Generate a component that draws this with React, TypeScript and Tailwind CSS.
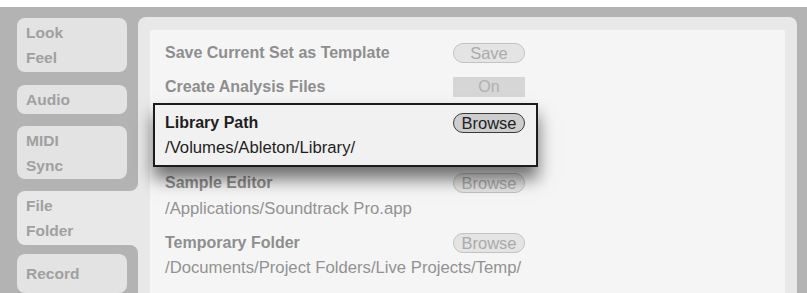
const font = "font-['Liberation_Sans',Arial,sans-serif]"

function Tab({ lines, h, selected }: { lines: string[]; h: string; selected?: boolean }) {
    return (
        <div className={`flex ${h}`}>
            <div
                className={`w-[110px] flex flex-col justify-center pl-[9px] font-bold text-[15.5px] leading-[25px] text-[#a0a0a0] ${selected ? "bg-[#e8e8e8] rounded-l-[8px]" : "bg-[#e3e3e3] rounded-[8px]"}`}
            >
                {lines.map((l) => (
                    <span key={l}>{l}</span>
                ))}
            </div>
            <div className={`w-[11px] ${selected ? "bg-[#e8e8e8]" : ""}`} />
        </div>
    )
}

function Pill({ label, active }: { label: string; active?: boolean }) {
    return (
        <div
            className={`w-[72px] h-[20px] rounded-full border flex items-center justify-center text-[16.5px] leading-none ${active ? "border-[#3a3a3a] bg-[#cdcdcd] text-[#222]" : "border-[#c2c2c2] bg-[#e4e4e4] text-[#aaaaaa]"}`}
        >
            {label}
        </div>
    )
}

function Row({ label, children, h = "h-[26px]", mt = "" }: { label: string; children?: React.ReactNode; h?: string; mt?: string }) {
    return (
        <div className={`w-[360px] ${h} ${mt} flex items-center justify-between`}>
            <span className="font-bold text-[16px] text-[#8e8e8e]">{label}</span>
            {children}
        </div>
    )
}

function PathLine({ text, h = "h-[26px]", dark }: { text: string; h?: string; dark?: boolean }) {
    return (
        <div className={`${h} flex items-center text-[16.7px] ${dark ? "text-[#1e1e1e]" : "text-[#929292]"}`}>{text}</div>
    )
}

export default function App() {
    return (
        <div className={`w-[807px] h-[293px] overflow-hidden bg-white pt-[7px] ${font}`}>
            <div className="h-full bg-[#b3b3b3] flex pt-[10px] pl-[17px] pr-[10px]">
                <div className="flex flex-col w-[121px] pt-[1px]">
                    <Tab lines={["Look", "Feel"]} h="h-[56px]" />
                    <div className="h-[13px]" />
                    <Tab lines={["Audio"]} h="h-[30px]" />
                    <div className="h-[13px]" />
                    <Tab lines={["MIDI", "Sync"]} h="h-[55px]" />
                    <div className="flex h-[12px]">
                        <div className="w-[110px]" />
                        <div className="w-[11px] bg-[#e8e8e8]">
                            <div className="h-full bg-[#b3b3b3] rounded-br-[8px]" />
                        </div>
                    </div>
                    <Tab lines={["File", "Folder"]} h="h-[56px]" selected />
                    <div className="flex h-[10px]">
                        <div className="w-[110px]" />
                        <div className="w-[11px] bg-[#e8e8e8]">
                            <div className="h-full bg-[#b3b3b3] rounded-tr-[8px]" />
                        </div>
                    </div>
                    <Tab lines={["Record"]} h="h-[40px]" />
                </div>
                <div className="flex-1 bg-[#e8e8e8] rounded-t-[8px] pt-[13px] pl-[12px] pr-[12px]">
                    <div className="h-full bg-[#f5f5f5] rounded-t-[2px] pt-[10px] pl-[15px]">
                        <Row label="Save Current Set as Template">
                            <Pill label="Save" />
                        </Row>
                        <Row label="Create Analysis Files" mt="mt-[8px]">
                            <div className="w-[72px] h-[20px] bg-[#d6d6d6] flex items-center justify-center text-[16px] text-[#b0b0b0]">On</div>
                        </Row>
                        <div className="relative z-10 mt-[3px] -ml-[12px] w-[385px] border-2 border-[#1c1c1c] bg-[#f1f1f1] pl-[10px] pr-[11px] pt-[5px] pb-[5px] shadow-[0_12px_16px_rgba(0,0,0,0.55)]">
                            <div className="h-[26px] flex items-center justify-between">
                                <span className="font-bold text-[16px] text-[#1e1e1e]">Library Path</span>
                                <Pill label="Browse" active />
                            </div>
                            <PathLine text="/Volumes/Ableton/Library/" h="h-[24px]" dark />
                        </div>
                        <Row label="Sample Editor" mt="mt-[3px]">
                            <Pill label="Browse" />
                        </Row>
                        <PathLine text="/Applications/Soundtrack Pro.app" />
                        <Row label="Temporary Folder" mt="mt-[8px]">
                            <Pill label="Browse" />
                        </Row>
                        <PathLine text="/Documents/Project Folders/Live Projects/Temp/" h="h-[24px]" />
                    </div>
                </div>
            </div>
        </div>
    )
}
